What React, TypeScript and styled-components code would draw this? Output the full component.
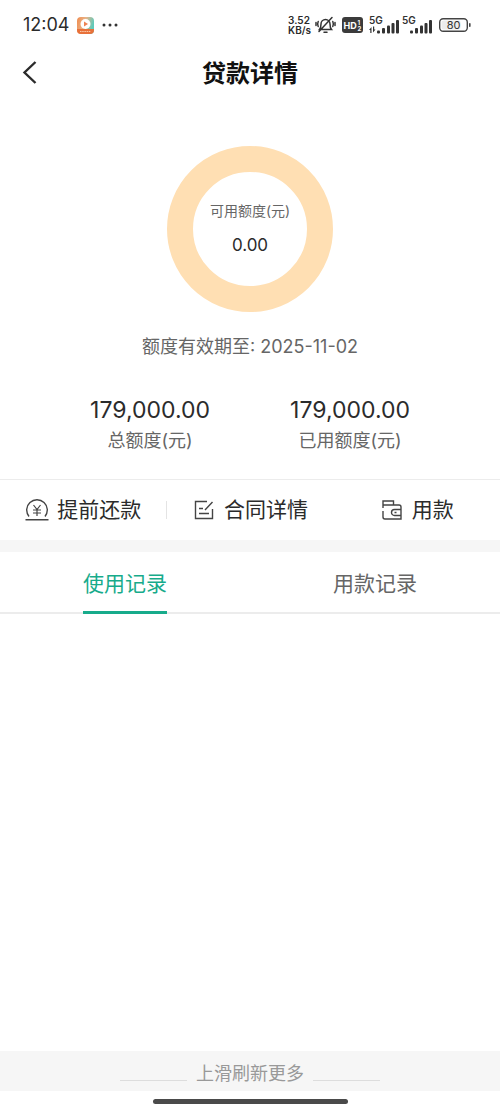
import React from "react";
import styled, { createGlobalStyle } from "styled-components";

const GlobalStyle = createGlobalStyle`
  *, *::before, *::after { box-sizing: border-box; }
  body {
    margin: 0;
    background: #fff;
    color: #2b2b2b;
    font-family: Inter, "Noto Sans CJK SC", sans-serif;
  }
  button { font: inherit; color: inherit; border: 0; padding: 0; background: none; cursor: pointer; }
  svg { display: block; flex: none; }
`;

const Page = styled.div`
  min-height: 100vh;
  display: flex;
  flex-direction: column;
`;

const StatusBar = styled.div`
  display: flex;
  align-items: center;
  justify-content: space-between;
  height: 50px;
  padding: 0 29px 0 23px;
`;

const StatusGroup = styled.div<{ $gap: number }>`
  display: flex;
  align-items: center;
  gap: ${(p) => p.$gap}px;
`;

const Clock = styled.span`
  font-size: 18px;
  line-height: 20px;
`;

const Speed = styled.span`
  display: flex;
  flex-direction: column;
  font-size: 10px;
  font-weight: 600;
  line-height: 10px;
`;

const Header = styled.header`
  display: grid;
  grid-template-columns: 60px 1fr 60px;
  align-items: center;
  height: 44px;
`;

const BackButton = styled.button`
  display: flex;
  align-items: center;
  height: 44px;
  padding-left: 22px;
`;

const Title = styled.h1`
  margin: 0;
  padding-top: 3px;
  text-align: center;
  font-size: 24px;
  line-height: 32px;
  font-weight: 700;
  color: #111;
`;

const Summary = styled.section`
  display: flex;
  flex-direction: column;
  align-items: center;
  padding: 52px 0 24px;
`;

const Ring = styled.div`
  display: flex;
  flex-direction: column;
  align-items: center;
  justify-content: center;
  gap: 12px;
  width: 166px;
  height: 166px;
  border: 26px solid #ffdfb3;
  border-radius: 50%;
`;

const RingLabel = styled.span`
  font-size: 14px;
  line-height: 20px;
  color: #666;
  white-space: nowrap;
`;

const RingValue = styled.span`
  font-size: 17px;
  line-height: 24px;
`;

const Validity = styled.p`
  margin: 21px 0 0;
  font-size: 18px;
  line-height: 28px;
  color: #666;
`;

const Totals = styled.dl`
  display: flex;
  justify-content: center;
  width: 80%;
  margin: 32px 0 0;
`;

const Total = styled.div`
  flex: 1;
  display: flex;
  flex-direction: column-reverse;
  text-align: center;
`;

const TotalLabel = styled.dt`
  font-size: 18px;
  line-height: 28px;
  color: #666;
`;

const TotalValue = styled.dd`
  margin: 0;
  font-size: 23px;
  line-height: 34px;
`;

const Actions = styled.nav`
  display: flex;
  border-top: 1px solid #ececec;
  border-bottom: 12px solid #f6f6f6;
`;

const Action = styled.button<{ $divided?: boolean }>`
  position: relative;
  flex: 1;
  display: flex;
  align-items: center;
  justify-content: center;
  gap: 8px;
  height: 60px;
  font-size: 21px;

  &::after {
    content: "";
    display: ${(p) => (p.$divided ? "block" : "none")};
    position: absolute;
    right: 0;
    top: 21px;
    width: 1px;
    height: 18px;
    background: #e4e4e4;
  }
`;

const ActionLabel = styled.span`
  line-height: 30px;
  padding-bottom: 1px;
`;

const Tabs = styled.div`
  display: flex;
  border-bottom: 2px solid #ececec;
`;

const TabCell = styled.div`
  flex: 1;
  display: flex;
  justify-content: center;
`;

const Tab = styled.button<{ $active?: boolean }>`
  height: 62px;
  margin-bottom: -2px;
  border-bottom: 3px solid ${(p) => (p.$active ? "#17ab8b" : "transparent")};
  color: ${(p) => (p.$active ? "#17ab8b" : "#666")};
  font-size: 21px;
`;

const Records = styled.main`
  flex: 1;
`;

const More = styled.footer`
  display: flex;
  align-items: center;
  justify-content: center;
  gap: 9px;
  height: 40px;
  padding-top: 2px;
  background: #f6f6f6;
  color: #999;
  font-size: 18px;

  &::before, &::after {
    content: "";
    width: 67px;
    height: 1px;
    margin-top: 16px;
    background: #ddd;
  }
`;

const HomeArea = styled.div`
  display: flex;
  align-items: center;
  justify-content: center;
  height: 20px;
`;

const HomeBar = styled.div`
  width: 39%;
  height: 5px;
  border-radius: 3px;
  background: #4a4a4a;
`;

const AppBadge = () => (
  <svg width="17" height="17" viewBox="0 0 17 17">
    <defs>
      <linearGradient id="badge" x1="0" y1="0" x2="1" y2="0.3">
        <stop offset="0" stopColor="#f08a4c" />
        <stop offset="0.5" stopColor="#e8b48a" />
        <stop offset="1" stopColor="#5fcabb" />
      </linearGradient>
    </defs>
    <rect width="17" height="17" rx="4" fill="url(#badge)" />
    <path d="M0 12h17v1a4 4 0 0 1-4 4H4a4 4 0 0 1-4-4z" fill="#e8713a" />
    <path d="M3 14.500h11" stroke="#f9c9a8" strokeWidth="1.200" strokeDasharray="1.500 .7" />
    <circle cx="8.500" cy="7" r="5" fill="#fff" />
    <path d="M7 4.600v4.800L11 7z" fill="#ee8353" />
  </svg>
);

const Dots = () => (
  <svg width="16" height="4" viewBox="0 0 16 4" fill="#333">
    <circle cx="2" cy="2" r="1.500" />
    <circle cx="8" cy="2" r="1.500" />
    <circle cx="14" cy="2" r="1.500" />
  </svg>
);

const MutedBell = () => (
  <svg width="21" height="18" viewBox="0 0 21 18" fill="none" stroke="#333" strokeWidth="1.500" strokeLinecap="round">
    <path d="M4.500 13.500h12c-1.300-1.500-1.500-2.500-1.500-5.500a4.500 4.500 0 0 0-9 0c0 3-.2 4-1.500 5.500zM9 16.300h3M17 1.500 4 15.500M3.200 5.500c-.7 1.600-.7 3.400 0 5M1 6.500v3M17.800 5.500c.7 1.600.7 3.400 0 5M20 6.500v3" />
  </svg>
);

const HdBadge = () => (
  <svg width="21" height="16" viewBox="0 0 21 16">
    <rect width="21" height="16" rx="3" fill="#3b3b3b" />
    <g fill="#fff" fontFamily="Inter, sans-serif" fontWeight="700">
      <text x="1.500" y="11.500" fontSize="9">HD</text>
      <text x="15.500" y="7.500" fontSize="6">1</text>
      <text x="15.500" y="14" fontSize="6">2</text>
    </g>
  </svg>
);

const Signal = ({ data }: { data?: boolean }) => (
  <svg width="31" height="24" viewBox="0 -3 31 24" fill="#333">
    <text x="0" y="8" fontSize="10" fontWeight="600" fontFamily="Inter, sans-serif">5G</text>
    {data && <path d="M0 14 2.500 11v6H1.300v-3zM6.500 13.500 4 16.500v-6h1.200v3z" />}
    <rect x="8" y="14.500" width="3" height="3" rx="1" />
    <rect x="13" y="12" width="3" height="5.500" rx="1" />
    <rect x="18" y="9.500" width="3" height="8" rx="1" />
    <rect x="22.500" y="7" width="3" height="10.500" rx="1" />
    <rect x="27" y="4" width="3" height="13.500" rx="1" />
  </svg>
);

const Battery = () => (
  <svg width="32" height="14" viewBox="0 0 32 14">
    <rect x=".7" y=".7" width="27.600" height="12.600" rx="3.500" fill="#fff" stroke="#444" strokeWidth="1.400" />
    <rect x="2.500" y="2.500" width="19" height="9" rx="2" fill="#ececec" />
    <rect x="30" y="5" width="1.600" height="4" rx=".8" fill="#444" />
    <text x="14.500" y="11" textAnchor="middle" fontSize="11" fontWeight="400" fontFamily="Inter, sans-serif" fill="#333">80</text>
  </svg>
);

const BackIcon = () => (
  <svg width="15" height="23" viewBox="0 0 15 23" fill="none" stroke="#2b2b2b" strokeWidth="2.400">
    <path d="M13.500 1 2.500 11.500l11 10.500" />
  </svg>
);

const RepayIcon = () => (
  <svg width="24" height="22" viewBox="0 0 24 22" fill="none" stroke="#444" strokeWidth="1.400">
    <path d="M4 17.500a10.300 10.300 0 1 1 16 0M.5 20.800h23" />
    <path d="M8.500 6l3.500 4.500L15.500 6M12 10.500V17M8 11h8M8 14h8" strokeWidth="1.200" />
  </svg>
);

const ContractIcon = () => (
  <svg width="24" height="20" viewBox="-2 0 24 20" fill="none" stroke="#444" strokeWidth="1.400">
    <path d="M13 1.500H1.500v17h17V9M18.500 2 11 10M5 8.500h4M5 13.500h10" />
  </svg>
);

const WalletIcon = () => (
  <svg width="24" height="20" viewBox="-2 0 24 20" fill="none" stroke="#444" strokeWidth="1.400">
    <path d="M1 8V1h10.500v4M1 5h16q2 0 2 2v2.500M1 11v6q0 2 2 2h16v-3.500M19 9.500h-6.500a3 3 0 0 0 0 6H19zM12.500 12.500h2" />
  </svg>
);

export default function App() {
  return (
    <>
      <GlobalStyle />
      <Page>
        <StatusBar>
          <StatusGroup $gap={8}>
            <Clock>12:04</Clock>
            <AppBadge />
            <Dots />
          </StatusGroup>
          <StatusGroup $gap={6}>
            <StatusGroup $gap={4}>
              <Speed><span>3.52</span><span>KB/s</span></Speed>
              <MutedBell />
            </StatusGroup>
            <HdBadge />
            <StatusGroup $gap={2}>
              <Signal data />
              <Signal />
            </StatusGroup>
            <Battery />
          </StatusGroup>
        </StatusBar>
        <Header>
          <BackButton aria-label="返回"><BackIcon /></BackButton>
          <Title>贷款详情</Title>
        </Header>
        <Summary>
          <Ring>
            <RingLabel>可用额度(元)</RingLabel>
            <RingValue>0.00</RingValue>
          </Ring>
          <Validity>额度有效期至: 2025-11-02</Validity>
          <Totals>
            <Total>
              <TotalLabel>总额度(元)</TotalLabel>
              <TotalValue>179,000.00</TotalValue>
            </Total>
            <Total>
              <TotalLabel>已用额度(元)</TotalLabel>
              <TotalValue>179,000.00</TotalValue>
            </Total>
          </Totals>
        </Summary>
        <Actions>
          <Action $divided><RepayIcon /><ActionLabel>提前还款</ActionLabel></Action>
          <Action><ContractIcon /><ActionLabel>合同详情</ActionLabel></Action>
          <Action><WalletIcon /><ActionLabel>用款</ActionLabel></Action>
        </Actions>
        <Tabs role="tablist">
          <TabCell><Tab role="tab" aria-selected="true" $active>使用记录</Tab></TabCell>
          <TabCell><Tab role="tab" aria-selected="false">用款记录</Tab></TabCell>
        </Tabs>
        <Records />
        <More>上滑刷新更多</More>
        <HomeArea><HomeBar /></HomeArea>
      </Page>
    </>
  );
}
